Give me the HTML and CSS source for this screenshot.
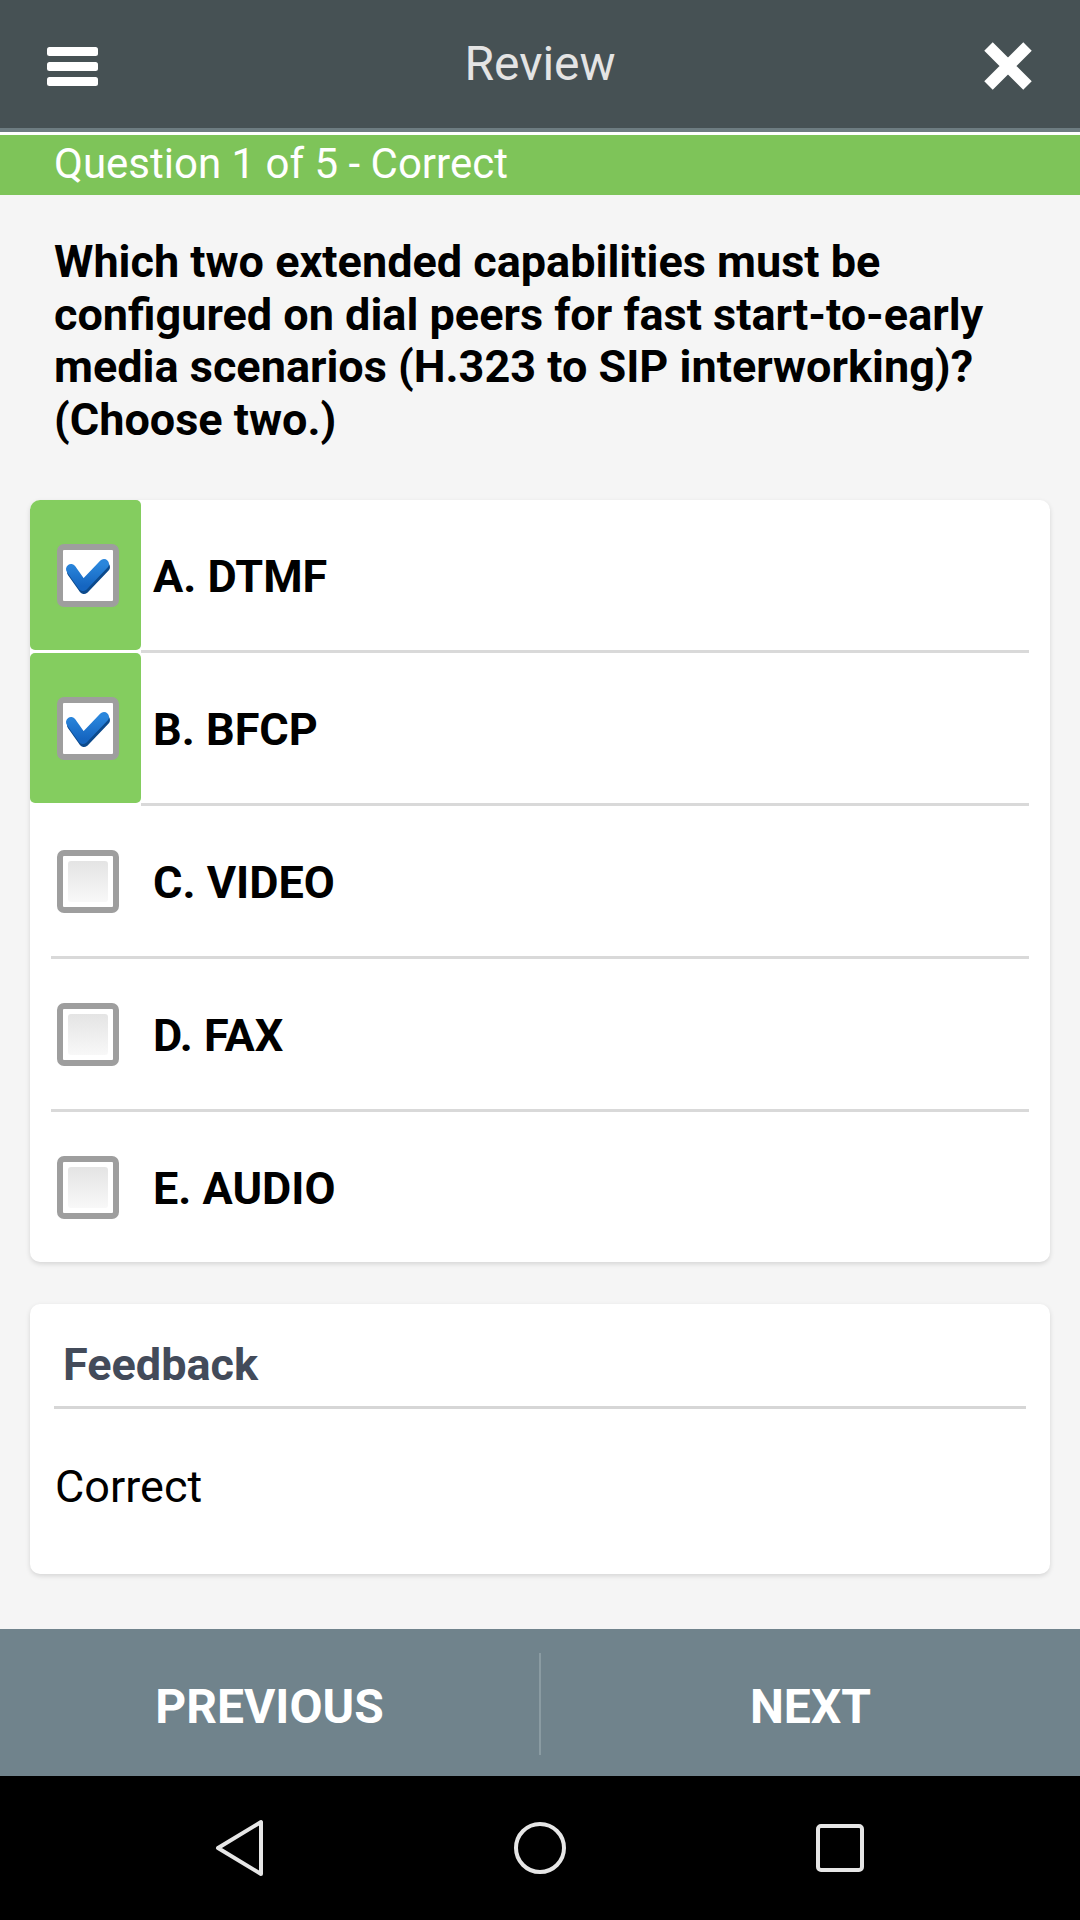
FILE: index.html
```html
<!DOCTYPE html>
<html lang="en">
<head>
<meta charset="utf-8">
<title>Review</title>
<link rel="stylesheet" href="styles.css">
</head>
<body>
<div class="screen">
  <header class="topbar">
    <div class="menu-btn">
      <svg width="51" height="39" viewBox="0 0 51 39"><rect x="0" y="0" width="51" height="9" rx="2.5" fill="#fff"/><rect x="0" y="15" width="51" height="9" rx="2.5" fill="#fff"/><rect x="0" y="30" width="51" height="9" rx="2.5" fill="#fff"/></svg>
    </div>
    <div class="title">Review</div>
    <div class="close-btn">
      <svg width="48" height="48" viewBox="0 0 48 48"><path d="M4.5 4.5 L43.5 43.5 M43.5 4.5 L4.5 43.5" stroke="#fff" stroke-width="12" stroke-linecap="butt" fill="none"/></svg>
    </div>
  </header>
  <div class="status-wrap">
    <div class="status">Question 1 of 5 - Correct</div>
  </div>

  <main class="content">
    <p class="question">Which two extended capabilities must be configured on dial peers for fast start-to-early media scenarios (H.323 to SIP interworking)? (Choose two.)</p>

    <section class="card options">
      <div class="option selected">
        <div class="tile">
          <span class="box">
            <svg width="50" height="50" viewBox="0 0 50 50">
              <defs><linearGradient id="chk" x1="0" y1="0" x2="0" y2="1"><stop offset="0" stop-color="#2a86dc"/><stop offset="1" stop-color="#1565c0"/></linearGradient></defs>
              <path d="M8 20 L20 37 L41 15" stroke="#0c4a8c" stroke-width="10" stroke-linecap="round" stroke-linejoin="round" fill="none" transform="translate(1,2)"/>
              <path d="M8 19 L20 36 L41 14" stroke="url(#chk)" stroke-width="10" stroke-linecap="round" stroke-linejoin="round" fill="none"/>
            </svg>
          </span>
        </div>
        <span class="label">A. DTMF</span>
      </div>
      <div class="sep sep-sel"></div>
      <div class="option selected">
        <div class="tile">
          <span class="box">
            <svg width="50" height="50" viewBox="0 0 50 50">
              <path d="M8 20 L20 37 L41 15" stroke="#0c4a8c" stroke-width="10" stroke-linecap="round" stroke-linejoin="round" fill="none" transform="translate(1,2)"/>
              <path d="M8 19 L20 36 L41 14" stroke="url(#chk)" stroke-width="10" stroke-linecap="round" stroke-linejoin="round" fill="none"/>
            </svg>
          </span>
        </div>
        <span class="label">B. BFCP</span>
      </div>
      <div class="sep sep-sel"></div>
      <div class="option">
        <div class="tile"><span class="box empty"><span class="fill"></span></span></div>
        <span class="label">C. VIDEO</span>
      </div>
      <div class="sep"></div>
      <div class="option">
        <div class="tile"><span class="box empty"><span class="fill"></span></span></div>
        <span class="label">D. FAX</span>
      </div>
      <div class="sep"></div>
      <div class="option">
        <div class="tile"><span class="box empty"><span class="fill"></span></span></div>
        <span class="label">E. AUDIO</span>
      </div>
    </section>

    <section class="card feedback">
      <h2 class="fb-title">Feedback</h2>
      <div class="fb-rule"></div>
      <p class="fb-text">Correct</p>
    </section>
  </main>

  <nav class="pager">
    <div class="pager-btn">PREVIOUS</div>
    <div class="pager-div"></div>
    <div class="pager-btn">NEXT</div>
  </nav>

  <div class="sysnav">
    <div class="sys-item">
      <svg width="52" height="60" viewBox="0 0 52 60"><path d="M47 4 L47 56 L4 30 Z" stroke="#e6e6e6" stroke-width="4" stroke-linejoin="round" fill="none"/></svg>
    </div>
    <div class="sys-item">
      <svg width="54" height="54" viewBox="0 0 54 54"><circle cx="27" cy="27" r="24" stroke="#e6e6e6" stroke-width="4" fill="none"/></svg>
    </div>
    <div class="sys-item">
      <svg width="50" height="50" viewBox="0 0 50 50"><rect x="3" y="3" width="44" height="44" rx="3" stroke="#e6e6e6" stroke-width="4" fill="none"/></svg>
    </div>
  </div>
</div>
</body>
</html>
```

FILE: styles.css
```css
* { box-sizing: border-box; }

html, body {
  margin: 0;
  padding: 0;
}

body {
  width: 1080px;
  height: 1920px;
  background: #f5f5f5;
  font-family: Roboto, "Liberation Sans", Arial, sans-serif;
  color: #000;
}

.screen {
  width: 1080px;
  height: 1920px;
  display: flex;
  flex-direction: column;
}

/* top app bar */
.topbar {
  height: 132px;
  flex: none;
  background: #465154;
  border-bottom: 4px solid #6d7c81;
  display: grid;
  grid-template-columns: 1fr auto 1fr;
  align-items: center;
}

.menu-btn {
  justify-self: start;
  padding-left: 47px;
  margin-top: 5px;
  display: flex;
}

.title {
  font-size: 48px;
  color: #e4e4e4;
  line-height: 1;
}

.close-btn {
  justify-self: end;
  margin-right: 48px;
  margin-top: 4px;
  display: flex;
}

.status-wrap {
  flex: none;
  background: #ffffff;
  padding-top: 3px;
}

.status {
  height: 60px;
  background: #7ec459;
  color: #ffffff;
  font-size: 42px;
  line-height: 58px;
  padding-left: 54px;
}

/* main content */
.content {
  flex: 1;
  padding: 0 30px;
}

.question {
  margin: 41px 0 0;
  padding: 0 24px;
  font-size: 45px;
  font-weight: 700;
  line-height: 52.5px;
}

.card {
  background: #ffffff;
  border-radius: 10px;
  box-shadow: 0 2px 5px rgba(0, 0, 0, 0.13);
}

.options {
  margin-top: 54px;
  overflow: hidden;
}

.option {
  height: 150px;
  display: flex;
  align-items: center;
}

.tile {
  width: 111px;
  height: 100%;
  display: flex;
  align-items: center;
  padding-left: 27px;
  border-radius: 5px;
}

.selected .tile {
  background: #84cd5f;
}

.box {
  width: 62px;
  height: 63px;
  border: 6px solid #9e9e9e;
  border-radius: 7px;
  background: #ffffff;
  display: flex;
  align-items: center;
  justify-content: center;
}

.box.empty {
  padding: 5px;
  align-items: stretch;
  justify-content: stretch;
}

.fill {
  flex: 1;
  border-radius: 3px;
  background: linear-gradient(#e4e4e4, #f8f8f8);
}

.label {
  margin-left: 12px;
  font-size: 45px;
  font-weight: 700;
  line-height: 1;
  margin-top: 2px;
}

.sep {
  height: 3px;
  background: #d9d9d9;
  margin: 0 21px;
}

.sep-sel {
  margin-left: 111px;
}

.feedback {
  margin-top: 42px;
  padding: 35px 24px 61px;
}

.fb-title {
  margin: 0;
  padding-left: 9px;
  font-size: 45px;
  line-height: 52px;
  font-weight: 700;
  color: #434b5a;
}

.fb-rule {
  height: 3px;
  background: #d6d6d6;
  margin-top: 15px;
}

.fb-text {
  margin: 52px 0 0;
  padding-left: 1px;
  font-size: 45px;
  line-height: 52px;
}

/* pager */
.pager {
  flex: none;
  height: 147px;
  background: #70838c;
  display: flex;
  align-items: stretch;
}

.pager-btn {
  flex: 1;
  display: flex;
  align-items: center;
  justify-content: center;
  color: #ffffff;
  font-size: 48px;
  font-weight: 700;
  padding-top: 7px;
}

.pager-div {
  width: 2px;
  background: #8a9ba2;
  margin: 24px 0 21px;
}

/* system nav */
.sysnav {
  flex: none;
  height: 144px;
  background: #000000;
  display: grid;
  grid-template-columns: repeat(3, 300px);
  justify-content: center;
  align-items: center;
}

.sys-item {
  display: flex;
  justify-content: center;
  align-items: center;
}
```
